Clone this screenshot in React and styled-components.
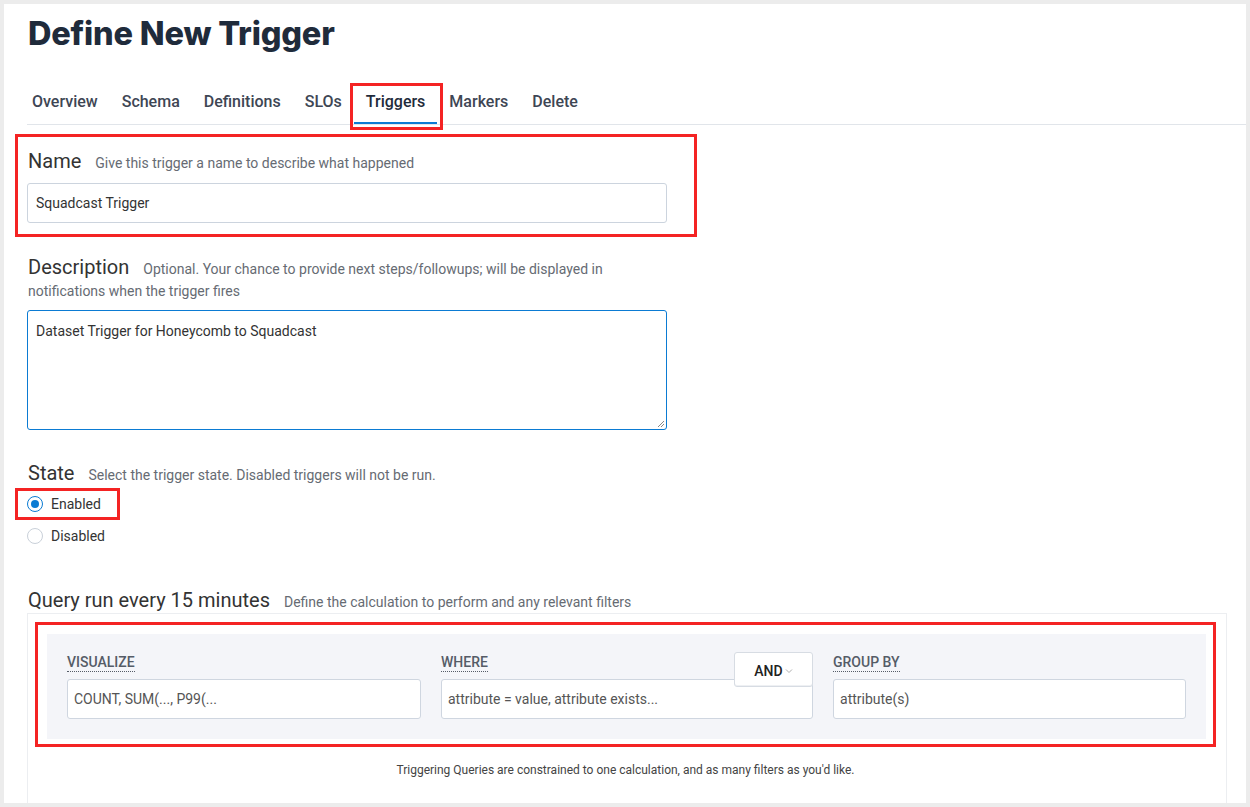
import React from "react";
import styled, { createGlobalStyle } from "styled-components";

const GlobalStyle = createGlobalStyle`
  html, body { margin: 0; padding: 0; }
  body {
    background: #ececec;
    font-family: Roboto, "Noto Sans", sans-serif;
    color: #333;
  }
  * { box-sizing: border-box; }
`;

const Page = styled.div`
  padding: 4px;
  height: 807px;
  overflow: hidden;
`;

const Panel = styled.div`
  background: #fff;
  height: 799px;
  overflow: hidden;
  padding-left: 23px;
`;

const Title = styled.h1`
  margin: 10px 0 0 1px;
  height: 40px;
  line-height: 40px;
  font-family: Inter, "Open Sans", sans-serif;
  font-weight: 800;
  font-size: 32.5px;
  letter-spacing: -0.2px;
  color: #1f2b3b;
`;

const TabBar = styled.div`
  margin-top: 28px;
  border-bottom: 1px solid #e1e5ea;
  height: 43px;
`;

const TabList = styled.div`
  display: flex;
  margin-left: -7px;
`;

const Tab = styled.div`
  position: relative;
  padding: 10px 12px 10px;
  line-height: 20px;
  font-size: 16px;
  font-weight: 500;
  color: ${(p) => (p.$active ? "#1f2b3b" : "#3e4654")};
  border-bottom: 2px solid ${(p) => (p.$active ? "#0b7bd3" : "transparent")};
  ${(p) =>
    p.$marked &&
    `
    &::before {
      content: "";
      position: absolute;
      left: -4px;
      right: -6px;
      top: 1px;
      bottom: -8px;
      border: 3px solid #f42323;
    }
  `}
`;

const Content = styled.div`
  padding-left: 0;
`;

const Marked = styled.div`
  margin-left: -12px;
  border: 3px solid #f42323;
  width: ${(p) => p.$w}px;
  padding: ${(p) => p.$pad};
`;

const Heading = styled.div`
  width: ${(p) => p.$w || 640}px;
  font-size: 20px;
  line-height: 22px;
  margin-top: ${(p) => p.$mt || 0}px;
  margin-left: 1px;
`;

const Label = styled.span`
  font-size: 20px;
  color: #333;
  margin-right: 14px;
`;

const Hint = styled.span`
  font-size: 14px;
  line-height: 16px;
  color: #666b73;
`;

const TextInput = styled.div`
  margin-top: 11px;
  width: 640px;
  height: 40px;
  border: 1px solid #ccd4de;
  border-radius: 3px;
  padding: 0 8px;
  display: flex;
  align-items: center;
  font-size: 14px;
  color: #333;
`;

const TextArea = styled.div`
  position: relative;
  margin-top: 10px;
  width: 640px;
  height: 120px;
  border: 1px solid #0b7bd3;
  border-radius: 3px;
  padding: 11px 8px;
  font-size: 14px;
  line-height: 18px;
  color: #333;
`;

const Grip = styled.svg`
  position: absolute;
  right: 1px;
  bottom: 1px;
`;

const RadioRow = styled.div`
  display: flex;
  align-items: center;
  height: 20px;
  gap: 8px;
  font-size: 14px;
  color: #333;
  margin-top: ${(p) => p.$mt || 0}px;
`;

const RadioCircle = styled.span`
  width: 16px;
  height: 16px;
  border-radius: 50%;
  border: 1px solid ${(p) => (p.$on ? "#0b7bd3" : "#c9d0d9")};
  display: flex;
  align-items: center;
  justify-content: center;
  &::after {
    content: "";
    width: 8px;
    height: 8px;
    border-radius: 50%;
    background: ${(p) => (p.$on ? "#0b7bd3" : "transparent")};
  }
`;

const QueryBox = styled.div`
  margin-top: 2px;
  width: 1200px;
  height: 200px;
  border: 1px solid #eceef1;
  padding: 8px 10px 0 7px;
`;

const QueryMark = styled.div`
  border: 3px solid #f42323;
  padding: 9px 7px 5px 9px;
`;

const QueryPanel = styled.div`
  background: #f4f5f9;
  padding: 20px 20px 20px 20px;
  display: grid;
  grid-template-columns: 353fr 371fr 352fr;
  column-gap: 20px;
`;

const Column = styled.div`
  position: relative;
  display: flex;
  flex-direction: column;
`;

const ColLabel = styled.span`
  align-self: flex-start;
  font-size: 14px;
  font-weight: 500;
  color: #555c67;
  line-height: 16px;
  padding-bottom: 1px;
  border-bottom: 1px dotted #555c67;
`;

const QueryInput = styled.div`
  margin-top: 7px;
  height: 40px;
  background: #fff;
  border: 1px solid #cfd6e0;
  border-radius: 3px;
  padding: 0 6px;
  display: flex;
  align-items: center;
  font-size: 14px;
  color: #555;
`;

const AndButton = styled.div`
  position: absolute;
  right: 0;
  top: -2px;
  width: 79px;
  height: 35px;
  background: #fff;
  border: 1px solid #d7dce3;
  border-radius: 3px;
  display: flex;
  align-items: center;
  justify-content: center;
  gap: 2px;
  font-size: 14px;
  font-weight: 500;
  color: #222;
  padding-top: 2px;
  box-shadow: inset 0 -1px 0 #eef0f3;
`;

const Footnote = styled.div`
  text-align: center;
  font-size: 12px;
  color: #444;
  margin-top: 16px;
`;

export default function App() {
  const tabs = ["Overview", "Schema", "Definitions", "SLOs", "Triggers", "Markers", "Delete"];
  return (
    <>
      <GlobalStyle />
      <Page>
        <Panel>
          <Title>Define New Trigger</Title>
          <TabBar>
            <TabList>
              {tabs.map((t) => (
                <Tab key={t} $active={t === "Triggers"} $marked={t === "Triggers"}>
                  {t}
                </Tab>
              ))}
            </TabList>
          </TabBar>
          <Content>
            <Marked $w={682} $pad="13px 26px 11px 9px" style={{ marginTop: "9px" }}>
              <Heading>
                <Label>Name</Label>
                <Hint>Give this trigger a name to describe what happened</Hint>
              </Heading>
              <TextInput>Squadcast Trigger</TextInput>
            </Marked>

            <Heading $mt={19}>
              <Label>Description</Label>
              <Hint>
                Optional. Your chance to provide next steps/followups; will be displayed in notifications when the trigger fires
              </Hint>
            </Heading>
            <TextArea>
              Dataset Trigger for Honeycomb to Squadcast
              <Grip width="8" height="8" viewBox="0 0 8 8">
                <path d="M7 1 L1 7 M7 4 L4 7" stroke="#888" strokeWidth="1" />
              </Grip>
            </TextArea>

            <Heading $mt={32}>
              <Label>State</Label>
              <Hint>Select the trigger state. Disabled triggers will not be run.</Hint>
            </Heading>
            <Marked $w={105} $pad="3px 0 3px 9px" style={{ marginTop: "4px" }}>
              <RadioRow>
                <RadioCircle $on />
                Enabled
              </RadioRow>
            </Marked>
            <RadioRow $mt={6}>
              <RadioCircle />
              Disabled
            </RadioRow>

            <Heading $mt={43} $w={900}>
              <Label>Query run every 15 minutes</Label>
              <Hint>Define the calculation to perform and any relevant filters</Hint>
            </Heading>
            <QueryBox>
              <QueryMark>
                <QueryPanel>
                  <Column>
                    <ColLabel>VISUALIZE</ColLabel>
                    <QueryInput>COUNT, SUM(..., P99(...</QueryInput>
                  </Column>
                  <Column>
                    <ColLabel>WHERE</ColLabel>
                    <QueryInput>attribute = value, attribute exists...</QueryInput>
                    <AndButton>
                      AND
                      <svg width="8" height="6" viewBox="0 0 8 6">
                        <path d="M1 1.5 L4 4.5 L7 1.5" fill="none" stroke="#999" strokeWidth="0.8" />
                      </svg>
                    </AndButton>
                  </Column>
                  <Column>
                    <ColLabel>GROUP BY</ColLabel>
                    <QueryInput>attribute(s)</QueryInput>
                  </Column>
                </QueryPanel>
              </QueryMark>
              <Footnote>
                Triggering Queries are constrained to one calculation, and as many filters as you'd like.
              </Footnote>
            </QueryBox>
          </Content>
        </Panel>
      </Page>
    </>
  );
}
